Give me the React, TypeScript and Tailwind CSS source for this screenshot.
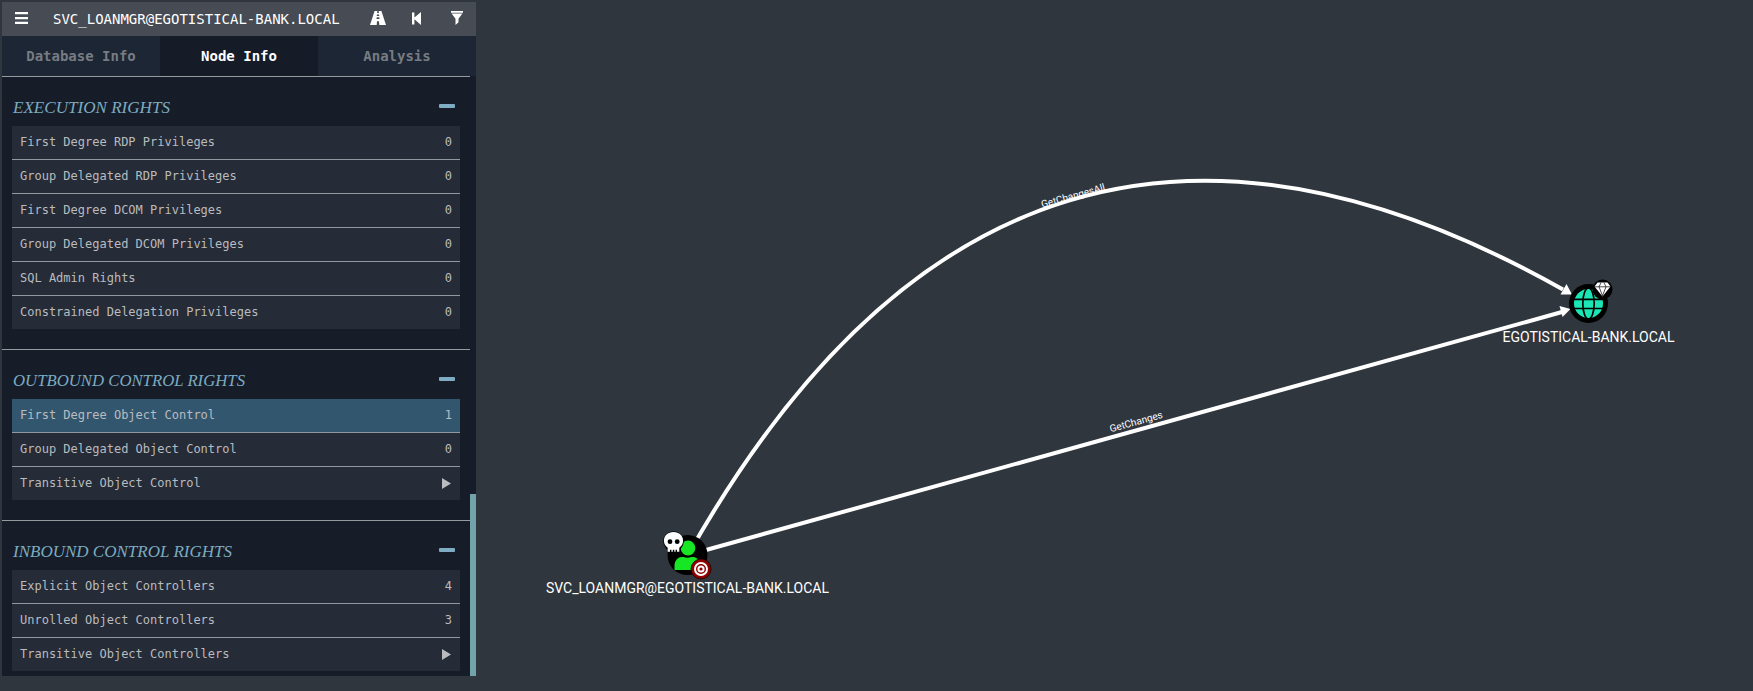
import React from 'react';

type Row = { label: string; value?: number; active?: boolean };
type Section = { title: string; width: number; rows: Row[] };

const sections: Section[] = [
  {
    title: 'EXECUTION RIGHTS',
    width: 157,
    rows: [
      { label: 'First Degree RDP Privileges', value: 0 },
      { label: 'Group Delegated RDP Privileges', value: 0 },
      { label: 'First Degree DCOM Privileges', value: 0 },
      { label: 'Group Delegated DCOM Privileges', value: 0 },
      { label: 'SQL Admin Rights', value: 0 },
      { label: 'Constrained Delegation Privileges', value: 0 },
    ],
  },
  {
    title: 'OUTBOUND CONTROL RIGHTS',
    width: 232,
    rows: [
      { label: 'First Degree Object Control', value: 1, active: true },
      { label: 'Group Delegated Object Control', value: 0 },
      { label: 'Transitive Object Control' },
    ],
  },
  {
    title: 'INBOUND CONTROL RIGHTS',
    width: 219,
    rows: [
      { label: 'Explicit Object Controllers', value: 4 },
      { label: 'Unrolled Object Controllers', value: 3 },
      { label: 'Transitive Object Controllers' },
    ],
  },
];

function Header() {
  return (
    <header className="flex h-[34px] shrink-0 items-center bg-[#464b54] pb-[3px] text-white">
      <svg className="ml-[13px] mt-[1px] h-3 w-[13px] shrink-0" viewBox="0 0 13 12" fill="currentColor">
        <path d="M0 0h13v2.3H0zM0 4.9h13v2.3H0zM0 9.7h13V12H0z" />
      </svg>
      <span className="ml-[25px] mt-[3px] w-[308px] shrink-0 text-[14px] leading-5">
        SVC_LOANMGR@EGOTISTICAL-BANK.LOCAL
      </span>
      <svg className="ml-[9px] mt-[1px] h-[14px] w-4 shrink-0" viewBox="0 0 16 14" fill="currentColor">
        <path
          fillRule="evenodd"
          d="M4.600 0h2.700l-.2 2h1.800l-.2-2h2.700L16 14H9.300l-.3-3.800H7L6.700 14H0zM7 3.600l-.3 1.400h2.600L9 3.600zM6.700 6.300l-.2 1.700h3l-.2-1.700z"
        />
      </svg>
      <svg className="ml-[26px] mt-[2px] h-[13px] w-[9px] shrink-0" viewBox="0 0 9 13" fill="currentColor">
        <path d="M0 .5h2.400v5L9 0v13L2.400 7.300v5.200H0z" />
      </svg>
      <svg className="ml-[30px] mt-[1px] h-[14px] w-3 shrink-0" viewBox="0 0 12 14" fill="currentColor">
        <path d="M0 0h12v1.700H0zM.6 2.500h10.800L7.500 7.700v3.500L4.500 14V7.700z" />
      </svg>
    </header>
  );
}

function Tabs() {
  return (
    <nav className="grid h-10 shrink-0 grid-cols-3 bg-[#1d2634] text-[14px] font-bold leading-10 text-[#777c83]">
      <span className="text-center">Database Info</span>
      <span className="bg-[#151c27] text-center text-white">Node Info</span>
      <span className="text-center">Analysis</span>
    </nav>
  );
}

function SectionBlock({ section }: { section: Section }) {
  return (
    <section className="border-t border-[#969a9f] px-[10px] pb-5">
      <div className="flex h-[49px] items-start justify-between pr-[5px]">
        <svg className="mt-4 h-8 w-[300px] overflow-visible">
          <text
            x="1"
            y="20"
            textLength={section.width}
            lengthAdjust="spacingAndGlyphs"
            className="fill-[#7cabc0] font-['Z003','URW_Chancery_L','Liberation_Serif',cursive] text-[16.5px] italic"
          >
            {section.title}
          </text>
        </svg>
        <i className="mt-[27px] h-1 w-4 rounded-[1px] bg-[#7facc3]" />
      </div>
      <div className="divide-y divide-[#94989e]">
        {section.rows.map((row) => (
          <div
            key={row.label}
            className={`flex h-[34px] items-center justify-between px-2 text-[12px] leading-[33px] last:h-[33px] ${
              row.active ? 'bg-[#33566f]' : 'bg-[#252b37]'
            }`}
          >
            <span>{row.label}</span>
            {row.value === undefined ? (
              <svg className="mr-[1px] h-[11px] w-[9px]" viewBox="0 0 9 11" fill="currentColor">
                <path d="M0 0 9 5.500 0 11z" />
              </svg>
            ) : (
              <span>{row.value}</span>
            )}
          </div>
        ))}
      </div>
    </section>
  );
}

function Graph() {
  return (
    <svg className="h-[691px] min-w-0 flex-1 font-[Roboto,sans-serif]" viewBox="476 0 1277 691">
      <g stroke="#fff" strokeWidth="4" fill="none">
        <path d="M688 555 1562 312" />
        <path d="M688 555Q1012 -21 1563 289.500" />
      </g>
      <g fill="#fff">
        <path d="M1572 294.500 1566.500 284 1560.500 294.500z" />
        <path d="M1570.500 309 1559.500 306 1562.500 317z" />
        <text fontSize="10" textAnchor="middle" transform="translate(1074 199) rotate(-15.600)">
          GetChangesAll
        </text>
        <text fontSize="10" textAnchor="middle" transform="translate(1137 425) rotate(-15.600)">
          GetChanges
        </text>
        <g fontSize="14" textAnchor="middle">
          <text x="687.500" y="593" textLength="283" lengthAdjust="spacingAndGlyphs">
            SVC_LOANMGR@EGOTISTICAL-BANK.LOCAL
          </text>
          <text x="1588.500" y="342" textLength="172" lengthAdjust="spacingAndGlyphs">
            EGOTISTICAL-BANK.LOCAL
          </text>
        </g>
      </g>

      <circle cx="687.500" cy="555" r="20" />
      <g fill="#17e625">
        <ellipse cx="688" cy="548" rx="7.300" ry="7.500" />
        <path d="M674.500 570v-4c0-5 3-8.700 7-9h2q4 1.500 8 0h2c4 .5 7 4 7 9v4z" />
      </g>
      <circle cx="673.500" cy="541.500" r="10.300" />
      <path
        fill="#fff"
        d="M673.500 532c5.800 0 9.600 3.700 9.600 8.800 0 3-1.400 5.300-3.800 6.900v4h-2.300v-2h-1.400v2h-1.300v-2h-1.500v2h-1.400v-2H670v2h-2.300v-4c-2.400-1.600-3.800-3.900-3.800-6.900 0-5.100 3.800-8.800 9.600-8.800z"
      />
      <circle cx="670" cy="541.700" r="2.400" />
      <circle cx="677.200" cy="541.700" r="2.400" />
      <circle cx="701" cy="569" r="10" fill="#8e0000" stroke="#220000" strokeWidth=".8" />
      <g fill="none" stroke="#fff" strokeWidth="2">
        <circle cx="701" cy="569" r="6" />
        <circle cx="701" cy="569" r="2.600" />
      </g>

      <circle cx="1588.500" cy="303.500" r="19.500" />
      <circle cx="1588.500" cy="303.500" r="14.500" fill="#1be6b5" />
      <g fill="none" stroke="#000" strokeWidth="1.700">
        <ellipse cx="1588.500" cy="303.500" rx="5.700" ry="15.500" />
        <path d="M1573 299.300h31M1573 308.500h31" />
      </g>
      <circle cx="1602.500" cy="289.500" r="10" />
      <path fill="#fff" d="M1597.500 282.500h10l3 4-8 10-8-10z" />
      <path
        fill="none"
        stroke="#000"
        strokeWidth=".7"
        d="M1594 286.800h17M1599 286.800l3.500 9 3.500-9M1599 286.800l2-4M1606 286.800l-2-4"
      />
    </svg>
  );
}

export default function App() {
  return (
    <main className="flex h-[691px] w-[1753px] overflow-hidden bg-[#2f363d]">
      <aside className="ml-0.5 mt-0.5 flex h-[674px] w-[474px] flex-col bg-[#171d28] font-['DejaVu_Sans_Mono',monospace] text-[#b9bbbf]">
        <Header />
        <Tabs />
        <div className="flex min-h-0 flex-1 overflow-hidden">
          <div className="w-[468px]">
            {sections.map((section) => (
              <SectionBlock key={section.title} section={section} />
            ))}
          </div>
          <div className="flex w-1.5 flex-col justify-end bg-[#161c29]">
            <div className="h-[182px] bg-[#72a3aa]" />
          </div>
        </div>
      </aside>
      <Graph />
    </main>
  );
}
